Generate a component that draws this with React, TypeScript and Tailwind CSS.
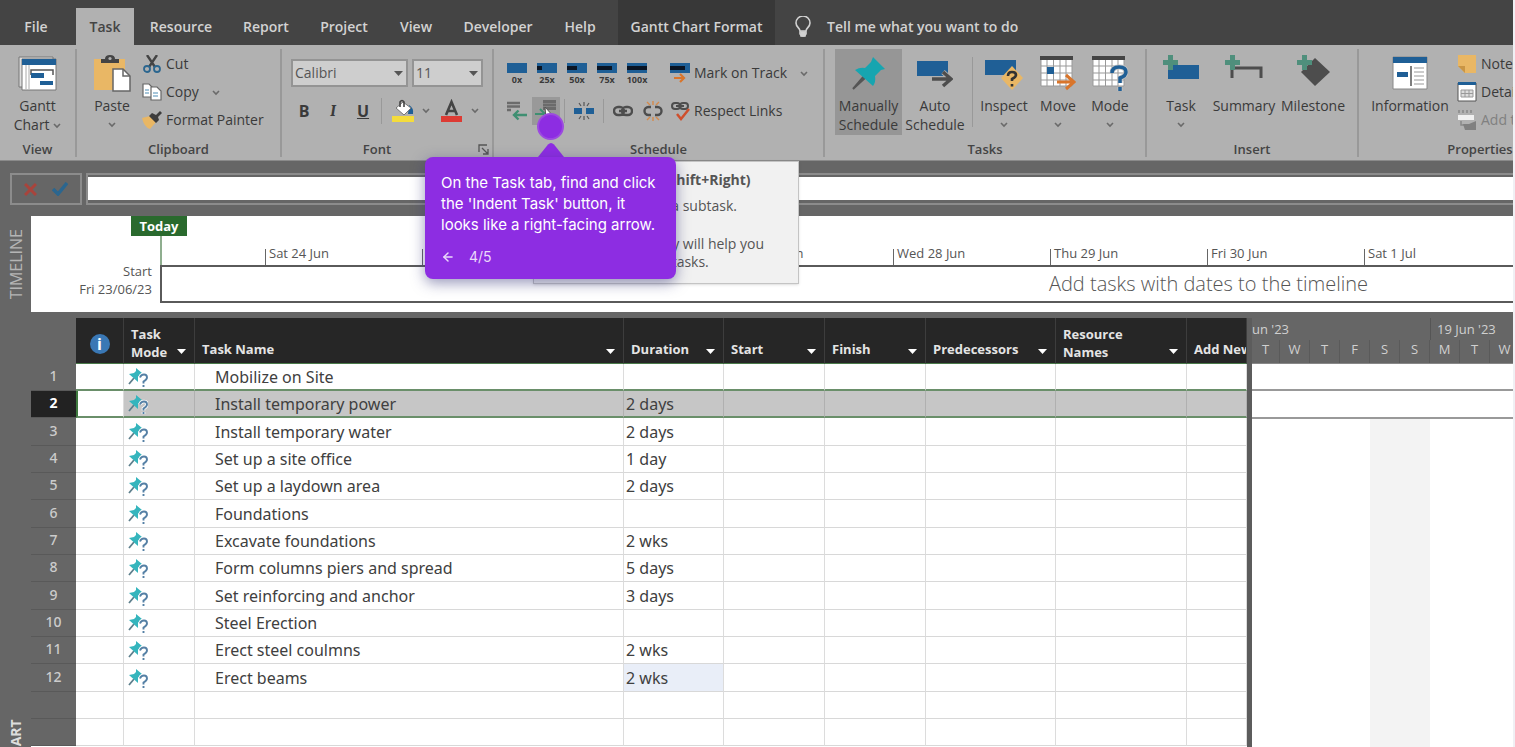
import type { ReactNode } from 'react'
import { ArrowLeft } from 'lucide-react'
import clsx from 'clsx'

const tabs = [
  { name: 'Resource', width: 'w-[94px]' },
  { name: 'Report', width: 'w-[76px]' },
  { name: 'Project', width: 'w-[80px]' },
  { name: 'View', width: 'w-[64px]' },
  { name: 'Developer', width: 'w-[100px]' },
  { name: 'Help', width: 'w-[64px]' },
]

const tasks = [
  { name: 'Mobilize on Site', duration: '' },
  { name: 'Install temporary power', duration: '2 days' },
  { name: 'Install temporary water', duration: '2 days' },
  { name: 'Set up a site office', duration: '1 day' },
  { name: 'Set up a laydown area', duration: '2 days' },
  { name: 'Foundations', duration: '' },
  { name: 'Excavate foundations', duration: '2 wks' },
  { name: 'Form columns piers and spread', duration: '5 days' },
  { name: 'Set reinforcing and anchor', duration: '3 days' },
  { name: 'Steel Erection', duration: '' },
  { name: 'Erect steel coulmns', duration: '2 wks' },
  { name: 'Erect beams', duration: '2 wks' },
  { name: '', duration: '' },
  { name: '', duration: '' },
]

const timelineDays = ['Sat 24 Jun', 'Sun 25 Jun', 'Mon 26 Jun', 'Tue 27 Jun', 'Wed 28 Jun', 'Thu 29 Jun', 'Fri 30 Jun', 'Sat 1 Jul']
const ganttDays = ['T', 'W', 'T', 'F', 'S', 'S', 'M', 'T', 'W']

const SELECTED = 1

export default function App() {
  return (
    <div className="relative h-screen overflow-hidden bg-[#f0f0f4] pr-[2px] font-['Open_Sans',sans-serif] text-sm text-[#3a3a3a]">
      <div className="flex h-full flex-col overflow-hidden bg-[#666]">
        <TabBar />
        <Ribbon />
        <EntryBar />
        <Timeline />
        <div className="mt-[6px] flex min-h-0 flex-1">
          <div className="flex w-[31px] shrink-0 justify-center overflow-hidden pt-[401px]">
            <span className="h-[100px] rotate-180 text-right leading-[18px] font-bold text-[#ddd] [writing-mode:vertical-rl]">
              GANTT CHART
            </span>
          </div>
          <TaskTable />
          <GanttPane />
        </div>
      </div>
      <IndentTooltip />
      <TourStep />
    </div>
  )
}

function TabBar() {
  return (
    <nav className="flex h-[45px] shrink-0 items-end overflow-hidden bg-[#444] font-semibold whitespace-nowrap text-[#d2d2d2]">
      <button className="h-[37px] w-[76px] shrink-0 pr-1">File</button>
      <button className="h-[37px] w-[58px] shrink-0 bg-[#b1b1b1] text-[#444]">Task</button>
      {tabs.map((tab) => (
        <button key={tab.name} className={clsx('h-[37px] shrink-0', tab.width)}>
          {tab.name}
        </button>
      ))}
      <button className="ml-[6px] h-[45px] w-[157px] shrink-0 bg-[#383838] pt-2">Gantt Chart Format</button>
      <button className="flex h-[37px] items-center gap-[16px] pl-[20px]">
        <svg width="16" height="22" viewBox="0 0 16 22" fill="none" stroke="#d2d2d2" strokeWidth="1.6">
          <path d="M5 15c0-3-4-4-4-8a7 7 0 0 1 14 0c0 4-4 5-4 8zM5 15v3l2 2h2l2-2v-3" />
          <path d="M6 16h4v4H6z" fill="#d2d2d2" />
        </svg>
        Tell me what you want to do
      </button>
    </nav>
  )
}

function Group({ label, className, children }: { label: string; className: string; children: ReactNode }) {
  return (
    <section className={clsx('relative flex shrink-0 flex-col border-r-2 border-[#999]', className)}>
      <div className="flex h-[93px]">{children}</div>
      <div className="text-center text-[13px] leading-[15px] font-semibold text-[#444]">{label}</div>
    </section>
  )
}

function BigButton({ icon, label, menu, className }: { icon: ReactNode; label: ReactNode; menu?: boolean; className: string }) {
  return (
    <button className={clsx('flex h-[86px] shrink-0 flex-col items-center leading-[19px] font-medium whitespace-nowrap', className)}>
      <span className="flex h-[47px] items-center justify-center">{icon}</span>
      <span>{label}</span>
      {menu && (
        <span className="flex h-[19px] items-center">
          <Chevron />
        </span>
      )}
    </button>
  )
}

function SmallButton({ icon, label, menu, muted }: { icon: ReactNode; label: string; menu?: boolean; muted?: boolean }) {
  return (
    <button className={clsx('flex h-[28px] items-center font-medium whitespace-nowrap', muted && 'text-[#808080]')}>
      <span className="mr-[4px] flex w-[20px] justify-center">{icon}</span>
      {label}
      {menu && <span className="ml-[13px]"><Chevron /></span>}
    </button>
  )
}

function Ribbon() {
  return (
    <div className="flex h-[116px] shrink-0 overflow-hidden border-b border-[#8a8a8a] bg-[#b1b1b1] pt-1 pb-[3px]">
      <Group label="View" className="w-[77px]">
        <BigButton className="w-full" icon={<GanttIcon />} label={<>Gantt<br />Chart <Chevron /></>} />
      </Group>

      <Group label="Clipboard" className="w-[205px]">
        <BigButton className="ml-[8px] w-[54px]" icon={<PasteIcon />} label="Paste" menu />
        <div className="ml-[3px] flex flex-col pt-px">
          <SmallButton icon={<CutIcon />} label="Cut" />
          <SmallButton icon={<CopyIcon />} label="Copy" menu />
          <SmallButton icon={<PainterIcon />} label="Format Painter" />
        </div>
      </Group>

      <Group label="Font" className="w-[212px] pr-[20px]">
        <div className="flex flex-col pt-[10px] pl-[9px]">
          <div className="flex gap-[4px]">
            <FontSelect label="Font" value="Calibri" className="w-[117px]" />
            <FontSelect label="Font size" value="11" className="w-[71px]" />
          </div>
          <div className="mt-[10px] flex h-[28px] items-center">
            <button className="w-[26px] text-base font-bold">B</button>
            <button className="w-[32px] font-serif text-base font-bold italic">I</button>
            <button className="w-[28px] text-base font-bold underline">U</button>
            <span className="mx-[4px] h-[26px] w-px bg-[#999]" />
            <button className="flex w-[55px] shrink-0 items-center gap-[8px] pl-[6px]" aria-label="Fill colour">
              <svg width="22" height="24" viewBox="0 0 22 24">
                <path d="M17 6q5 3 4 9h-5z" fill="#1f5f96" />
                <path d="m4 9 7-6 8 6-7 7z" fill="#fff" stroke="#777" />
                <path d="M8 8V3q2-3 4 0v5" fill="none" stroke="#444" strokeWidth="1.6" />
                <path d="M0 17h22v6H0z" fill="#f4dc3c" />
              </svg>
              <Chevron />
            </button>
            <button className="flex shrink-0 items-center gap-[9px]" aria-label="Font colour">
              <svg width="21" height="24" viewBox="0 0 21 24">
                <path d="m5 16 5.500-13L16 16M7.500 12h6" fill="none" stroke="#444" strokeWidth="2.600" />
                <path d="M0 17h21v6H0z" fill="#dd3b34" />
              </svg>
              <Chevron />
            </button>
          </div>
        </div>
        <svg className="absolute right-[3px] bottom-[2px]" width="11" height="11" viewBox="0 0 11 11" fill="none" stroke="#555" strokeWidth="1.3">
          <path d="M1 8V1h8M4 4l6 6M10 5v5H5" />
        </svg>
      </Group>

      <Group label="Schedule" className="w-[331px]">
        <div className="flex w-[174px] flex-col pt-[10px] pl-[8px]">
          <div className="flex h-[28px]">
            {[0, 25, 50, 75, 100].map((percent) => (
              <button key={percent} className="flex w-[30px] flex-col items-center pt-[4px]">
                <svg width="20" height="10" viewBox="0 0 20 10">
                  <path d="M0 0h20v10H0z" fill="#1f5f96" />
                  {percent > 0 && <path d={`M0 3h${percent / 5}v4H0z`} fill="#0a1524" />}
                </svg>
                <span className="text-[9px] leading-[13px] font-bold">{percent}x</span>
              </button>
            ))}
          </div>
          <div className="mt-[10px] flex h-[28px] items-center">
            <IconButton label="Outdent Task">
              <svg width="20" height="20" viewBox="0 0 20 20" fill="none">
                <path d="M0 2h13M0 5.500h13M0 9h4" stroke="#6b6b6b" strokeWidth="2.600" />
                <path d="M20 14H7m4.500-4.500L7 14l4.500 4.500" stroke="#3f8f72" strokeWidth="2.400" />
              </svg>
            </IconButton>
            <button aria-label="Indent Task" className="flex h-[28px] w-[28px] items-start justify-center bg-[#999] pt-[3px]">
              <svg width="22" height="20" viewBox="0 0 22 20" fill="none">
                <path d="M8 1.500h13M8 5h13M8 8.500h13" stroke="#6b6b6b" strokeWidth="2.800" />
                <path d="M0 14h9M5 9l5 5" stroke="#3f8f72" strokeWidth="2" />
                <path d="m10 7 1 12 3-3 5 1z" fill="#fff" stroke="#555" />
              </svg>
            </button>
            <span className="mx-[4px] h-[24px] w-px bg-[#999]" />
            <IconButton label="Split Task">
              <svg width="20" height="20" viewBox="0 0 20 20">
                <path d="M0 7h8v6H0zM12 7h8v6h-8z" fill="#1f5f96" />
                <path d="M10 1v4M5 2l2 3M15 2l-2 3M10 19v-4M5 18l2-3M15 18l-2-3" stroke="#555" strokeWidth="1.200" />
              </svg>
            </IconButton>
            <span className="mx-[4px] h-[24px] w-px bg-[#999]" />
            <IconButton label="Link Tasks">
              <ChainIcon />
            </IconButton>
            <IconButton label="Unlink Tasks">
              <svg width="20" height="20" viewBox="0 0 20 20" fill="none">
                <path d="M8 6H5.500a4 4 0 0 0 0 8H8M12 6h2.500a4 4 0 0 1 0 8H12" stroke="#4d4d4d" strokeWidth="2.400" />
                <path d="M10 0v4M4 1l3 3M16 1l-3 3M10 20v-4M4 19l3-3M16 19l-3-3" stroke="#d68a4a" strokeWidth="1.400" />
              </svg>
            </IconButton>
          </div>
        </div>
        <div className="flex flex-col gap-[10px] pt-[10px] pl-[2px]">
          <SmallButton
            label="Mark on Track"
            menu
            icon={
              <svg width="20" height="20" viewBox="0 0 20 20" fill="none">
                <path d="M0 0h20v10H0z" fill="#1f5f96" />
                <path d="M0 3h15v4H0z" fill="#0a1524" />
                <path d="M4 15h10M10 11l4 4-4 4" stroke="#d9752b" strokeWidth="2.200" />
              </svg>
            }
          />
          <SmallButton
            label="Respect Links"
            icon={
              <svg width="20" height="20" viewBox="0 0 20 20" fill="none">
                <path d="M5 2h2a3 3 0 0 1 0 6H5a3 3 0 0 1 0-6zM13 2h2a3 3 0 0 1 0 6h-2a3 3 0 0 1 0-6zM6 5h8" stroke="#4d4d4d" strokeWidth="2" />
                <path d="m7 13 4 5 8-10" stroke="#cf4f2c" strokeWidth="2.500" />
              </svg>
            }
          />
        </div>
      </Group>

      <Group label="Tasks" className="w-[322px]">
        <BigButton className="ml-[10px] w-[67px] bg-[#969696]" icon={<PinIcon />} label={<>Manually<br />Schedule</>} />
        <BigButton
          className="w-[66px]"
          label={<>Auto<br />Schedule</>}
          icon={
            <svg width="36" height="32" viewBox="0 0 36 32" fill="none">
              <path d="M0 4h31v15H0z" fill="#1f5f96" />
              <path d="M15 22h18M26 15l8 7-8 7" stroke="#b1b1b1" strokeWidth="5" />
              <path d="M15 22h18M26 15l8 7-8 7" stroke="#4d4d4d" strokeWidth="3.500" />
            </svg>
          }
        />
        <span className="mx-[4px] mt-[8px] h-[70px] w-px bg-[#999]" />
        <BigButton
          className="w-[54px]"
          label="Inspect"
          menu
          icon={
            <svg width="38" height="34" viewBox="0 0 38 34" fill="none">
              <path d="M0 4h31v15H0z" fill="#1f5f96" />
              <path d="m27 10 11 12-11 12-11-12z" fill="#e9b765" />
              <path d="M23 20q0-4 4-4t4 3q0 2-4 4v2M27 28v2.500" stroke="#333" strokeWidth="2.600" />
            </svg>
          }
        />
        <BigButton
          className="w-[54px]"
          label="Move"
          menu
          icon={
            <svg width="36" height="36" viewBox="0 0 36 36" fill="none">
              <CalendarGrid />
              <path d="M7 12h7v7H7z" fill="#1f5f96" />
              <path d="M17 27h16M26 20l8 7-8 7" stroke="#d9752b" strokeWidth="3" />
            </svg>
          }
        />
        <BigButton
          className="w-[50px]"
          label="Mode"
          menu
          icon={
            <svg width="36" height="36" viewBox="0 0 36 36" fill="none">
              <CalendarGrid />
              <path d="M20 18q0-6 7-6t7 5q0 4-6 6v5M28 32v4" stroke="#c4c4c4" strokeWidth="5" />
              <path d="M20 18q0-6 7-6t7 5q0 4-6 6v5M28 32v4" stroke="#1f5f96" strokeWidth="3.500" />
            </svg>
          }
        />
      </Group>

      <Group label="Insert" className="w-[212px]">
        <BigButton
          className="ml-[3px] w-[62px]"
          label="Task"
          menu
          icon={
            <svg width="36" height="36" viewBox="0 0 36 36">
              <path d="M5 10h31v14H5z" fill="#1f5f96" />
              <PlusMark />
            </svg>
          }
        />
        <BigButton
          className="w-[64px]"
          label="Summary"
          icon={
            <svg width="38" height="36" viewBox="0 0 38 36">
              <path d="M7 23V13h29v10" fill="none" stroke="#4d4d4d" strokeWidth="3" />
              <PlusMark />
            </svg>
          }
        />
        <BigButton
          className="ml-[2px] w-[70px]"
          label="Milestone"
          icon={
            <svg width="33" height="36" viewBox="0 0 33 36">
              <path d="M18 3l15 14-15 14L4 17z" fill="#4d4d4d" />
              <PlusMark />
            </svg>
          }
        />
      </Group>

      <Group label="Properties" className="w-[244px]">
        <BigButton
          className="ml-[6px] w-[90px]"
          label="Information"
          icon={
            <svg width="36" height="34" viewBox="0 0 36 34">
              <path d="M1 1h34v32H1z" fill="#fff" stroke="#888" />
              <path d="M1 1h34v6H1z" fill="#1f5f96" />
              <path d="M5 16h11v5H5z" fill="#1f5f96" />
              <path d="M19 10v20" stroke="#555" strokeWidth="1.500" />
              <path d="M22 12h10M22 16h10M22 20h10M22 24h10M22 28h10" stroke="#999" />
            </svg>
          }
        />
        <div className="ml-[2px] flex flex-col pt-px">
          <SmallButton
            label="Notes"
            icon={
              <svg width="18" height="18" viewBox="0 0 18 18">
                <path d="M0 0h18v18H7l-7-7z" fill="#e9b765" />
                <path d="M0 11h7v7z" fill="#c99545" />
              </svg>
            }
          />
          <SmallButton
            label="Details"
            icon={
              <svg width="20" height="20" viewBox="0 0 20 20">
                <path d="M1 1h18v18H1z" fill="#fff" stroke="#555" />
                <path d="M1 0h18v3H1z" fill="#1f5f96" />
                <path d="M4 8h12v7H4zM4 11.500h12M8 8v7M12 8v7" fill="#ddd" stroke="#999" />
              </svg>
            }
          />
          <SmallButton
            label="Add to Timeline"
            muted
            icon={
              <svg width="20" height="20" viewBox="0 0 20 20">
                <path d="M1 5h16v5H1z" fill="#f0f0f0" />
                <path d="M2 0v3M6 0v3M10 0v3M14 0v3M4 11v4h4" fill="none" stroke="#888" strokeWidth="1.500" />
                <path d="M6 14h6l7-3v9H8z" fill="#808080" />
              </svg>
            }
          />
        </div>
      </Group>
    </div>
  )
}

function FontSelect({ label, value, className }: { label: string; value: string; className: string }) {
  return (
    <div className={clsx('relative', className)}>
      <select
        aria-label={label}
        defaultValue={value}
        className="h-[28px] w-full appearance-none border-2 border-[#949494] bg-[#cecece] pl-[2px] text-sm text-[#555]"
      >
        <option>{value}</option>
      </select>
      <Caret className="pointer-events-none absolute top-[12px] right-[5px] fill-[#555]" />
    </div>
  )
}

function IconButton({ label, children }: { label: string; children: ReactNode }) {
  return (
    <button aria-label={label} className="flex h-[28px] w-[30px] shrink-0 items-center justify-center">
      {children}
    </button>
  )
}

function EntryBar() {
  return (
    <div className="flex shrink-0 gap-[4px] pt-[12px] pb-[11px] pl-[10px]">
      <div className="flex h-[32px] w-[72px] items-center justify-around border-2 border-[#8c8c8c] px-[4px]">
        <button aria-label="Cancel">
          <svg width="13" height="13" viewBox="0 0 13 13" stroke="#a8443c" strokeWidth="3">
            <path d="m1 1 11 11M12 1 1 12" />
          </svg>
        </button>
        <button aria-label="Enter">
          <svg width="16" height="14" viewBox="0 0 16 14" fill="none" stroke="#2b668f" strokeWidth="3.500">
            <path d="m1 7 5 5 9-11" />
          </svg>
        </button>
      </div>
      <div className="h-[32px] flex-1 border-y-2 border-l-2 border-[#8c8c8c] pt-[2px]">
        <input aria-label="Entry" className="block h-[23px] w-full bg-white px-2 outline-none" />
      </div>
    </div>
  )
}

function Timeline() {
  return (
    <div className="flex h-[96px] shrink-0">
      <div className="flex w-[31px] shrink-0 items-center justify-center">
        <span className="rotate-180 text-base leading-[18px] text-[#b5b5b5] [writing-mode:vertical-rl]">TIMELINE</span>
      </div>
      <div className="flex min-w-0 flex-1 bg-white text-[13px] text-[#555]">
        <div className="w-[129px] shrink-0 pt-[46px] pr-[8px] text-right leading-[18px]">
          <div>Start</div>
          <div>Fri 23/06/23</div>
        </div>
        <div className="min-w-0 flex-1">
          <div className="relative flex h-[49px] items-end overflow-x-clip overflow-y-visible border-l-2 border-[#8fae8f] pl-[103px]">
            {timelineDays.map((day) => (
              <div key={day} className="h-[16px] w-[157px] shrink-0 border-l border-[#666] pl-[3px]">
                <span className="relative -top-[6px] block leading-[20px]">{day}</span>
              </div>
            ))}
          </div>
          <div className="flex h-[38px] items-center border-2 border-r-0 border-[#5a5a5a]">
            <span className="mx-auto pl-[742px] text-[20px] font-light whitespace-nowrap text-[#555]">
              Add tasks with dates to the timeline
            </span>
          </div>
        </div>
      </div>
      <span className="absolute left-[131px] h-[20px] w-[56px] bg-[#2a6a2e] text-center text-[13px] leading-[20px] font-bold text-white">
        Today
      </span>
    </div>
  )
}

function HeadCell({ children, className, twoLines, noCaret }: { children: ReactNode; className: string; twoLines?: boolean; noCaret?: boolean }) {
  return (
    <th className={clsx('overflow-hidden border-r border-b border-r-[#3d3d3d] border-b-[#4a7a4a] bg-[#262626] p-0 align-bottom', className)}>
      <div className="flex items-end justify-between pr-[8px] pl-[7px]">
        <span className={clsx('text-left leading-[18px] font-bold', twoLines ? 'pb-[2px]' : 'pb-[5px] whitespace-nowrap')}>
          {children}
        </span>
        {!noCaret && <Caret className="mb-[9px] shrink-0 fill-white" />}
      </div>
    </th>
  )
}

function TaskTable() {
  return (
    <div className="w-[1221px] shrink-0 border-r-[5px] border-[#5c5c5c] bg-white">
      <table className="w-[1216px] table-fixed border-separate border-spacing-0">
        <thead>
          <tr className="h-[46px] text-[13px] text-[#e4e4e4]">
            <th className="w-[45px] bg-[#666]" aria-label="Row" />
            <th className="w-[48px] border-r border-b border-r-[#3d3d3d] border-b-[#4a7a4a] bg-[#262626] p-0">
              <span className="mx-auto mt-[6px] flex h-[20px] w-[20px] items-center justify-center rounded-full bg-[#3a78b5] text-base leading-none font-bold text-white">
                i
              </span>
            </th>
            <HeadCell className="w-[71px]" twoLines>Task<br />Mode</HeadCell>
            <HeadCell className="w-[429px]">Task Name</HeadCell>
            <HeadCell className="w-[100px]">Duration</HeadCell>
            <HeadCell className="w-[101px]">Start</HeadCell>
            <HeadCell className="w-[101px]">Finish</HeadCell>
            <HeadCell className="w-[130px]">Predecessors</HeadCell>
            <HeadCell className="w-[131px]" twoLines>Resource<br />Names</HeadCell>
            <HeadCell className="w-[60px]" noCaret>Add New</HeadCell>
          </tr>
        </thead>
        <tbody className="font-['Noto_Sans',sans-serif] text-base leading-[20px] text-[#404040]">
          {tasks.map((task, i) => {
            const selected = i === SELECTED
            const line = selected || i === SELECTED - 1 ? 'border-b-2 border-b-[#6a8f6a]' : 'border-b border-b-[#d8d8d8]'
            const cell = clsx('border-r p-0', line, selected ? 'border-r-[#b0b0b0] bg-[#c6c6c6]' : 'border-r-[#dcdcdc]')
            return (
              <tr key={i} className={i % 3 === 2 ? 'h-[28px]' : 'h-[27px]'}>
                <th
                  scope="row"
                  className={clsx(
                    'border-b border-b-[#595959] p-0 pb-[2px] text-sm',
                    selected ? 'bg-[#222] font-bold text-white' : 'bg-[#666] font-medium text-[#ccc]',
                  )}
                >
                  {i < 12 && i + 1}
                </th>
                <td className={clsx('border-r border-r-[#dcdcdc] p-0', line, selected && 'border-l-2 border-l-[#3f7a3f]')} />
                <td className={clsx(cell, 'pl-[4px]')}>{task.name && <ModeIcon />}</td>
                <td className={clsx(cell, 'pl-[20px]')}>{task.name}</td>
                <td className={clsx(cell, 'pl-[2px]', i === 11 && 'bg-[#e9eef8]')}>{task.duration}</td>
                <td className={cell} />
                <td className={cell} />
                <td className={cell} />
                <td className={cell} />
                <td className={cell} />
              </tr>
            )
          })}
        </tbody>
      </table>
    </div>
  )
}

function GanttPane() {
  return (
    <div className="flex min-w-0 flex-1 flex-col bg-white">
      <div className="h-[46px] shrink-0 overflow-hidden border-b border-[#888] bg-[#666] text-[13px] font-medium text-[#d0d0d0]">
        <div className="flex h-[22px] leading-[22px] whitespace-nowrap">
          <span className="w-[178px] shrink-0">un '23</span>
          <span className="border-l border-[#555] pl-[6px]">19 Jun '23</span>
        </div>
        <div className="flex h-[23px] leading-[18px]">
          {ganttDays.map((day, i) => (
            <span key={i} className="w-[30px] shrink-0 border-r border-[#5a5a5a] text-center first:w-[28px]">
              {day}
            </span>
          ))}
        </div>
      </div>
      <div className="flex flex-1 flex-col">
        <div className="h-[27px] border-b-2 border-[#999]" />
        <div className="h-[28px] border-b-2 border-[#999]" />
        <div className="flex flex-1 pl-[118px]">
          <div className="w-[60px] bg-[#f3f3f3]" />
        </div>
      </div>
    </div>
  )
}

function IndentTooltip() {
  return (
    <div className="absolute top-[161px] left-[533px] w-[266px] border border-[#c4c4c4] bg-[#f1f1f1] pt-[9px] pb-[12px] pl-[16px] leading-[18px] font-medium whitespace-nowrap text-[#555] shadow">
      <p className="font-bold">Indent Task (Alt+Shift+Right)</p>
      <p className="mt-[8px]">Turn this task into a subtask.</p>
      <p className="mt-[20px]">Using this hierarchy will help you</p>
      <p>and organize your tasks.</p>
    </div>
  )
}

function TourStep() {
  return (
    <div className="absolute top-[113px] left-[425px] flex w-[251px] flex-col items-center">
      <span className="h-[27px] w-[27px] rounded-full border-2 border-[#9c4ae0] bg-[#8d2de2]" />
      <svg className="mt-[3px]" width="26" height="14" viewBox="0 0 26 14">
        <path d="M0 14 10 1.500q3-3 6 0L26 14z" fill="#8d2de2" />
      </svg>
      <div className="w-full rounded-lg bg-[#8d2de2] px-4 pt-[15px] pb-[12px] font-['Inter',sans-serif] text-[15px] leading-[21px] whitespace-nowrap text-white shadow-[0_4px_14px_rgba(50,50,120,0.5)]">
        <p>
          On the Task tab, find and click
          <br />
          the 'Indent Task' button, it
          <br />
          looks like a right-facing arrow.
        </p>
        <div className="mt-[11px] flex items-center gap-[14px] text-sm leading-[21px] text-[#ead9fa]">
          <button aria-label="Previous step">
            <ArrowLeft size={14} strokeWidth={2.5} />
          </button>
          <span>4/5</span>
        </div>
      </div>
    </div>
  )
}

/* icons */

function Chevron() {
  return (
    <svg className="inline-block" width="8" height="6" viewBox="0 0 8 6" fill="none" stroke="#6a6a6a" strokeWidth="1.600">
      <path d="m1 1 3 3 3-3" />
    </svg>
  )
}

function Caret({ className }: { className: string }) {
  return (
    <svg className={className} width="9" height="5" viewBox="0 0 9 5">
      <path d="M0 0h9L4.500 5z" />
    </svg>
  )
}

function PlusMark() {
  return <path d="M5 0h5v5h5v5h-5v5H5v-5H0V5h5z" fill="#4f8f7c" />
}

function CalendarGrid() {
  return (
    <>
      <path d="M1 2h31v29H1z" fill="#fff" />
      <path d="M0 1h33v4H0z" fill="#444" />
      <path d="M1 5v26h31V5M7 5v26M13.500 5v26M20 5v26M26 5v26M1 11h31M1 18h31M1 25h31" stroke="#999" fill="none" />
    </>
  )
}

function ChainIcon() {
  return (
    <svg width="20" height="12" viewBox="0 0 20 12" fill="none" stroke="#4d4d4d" strokeWidth="2.400">
      <path d="M5 2h2a4 4 0 0 1 0 8H5a4 4 0 0 1 0-8zM13 2h2a4 4 0 0 1 0 8h-2a4 4 0 0 1 0-8zM6 6h8" />
    </svg>
  )
}

function GanttIcon() {
  return (
    <svg width="40" height="36" viewBox="0 0 40 36">
      <path d="M1 2h34v30H1z" fill="#ddd" stroke="#777" />
      <path d="M4 4h34v31H4z" fill="#fff" stroke="#777" />
      <path d="M4 4h34v6H4z" fill="#1f5f96" />
      <path d="M8 10v24M11 10v24" stroke="#aaa" />
      <path d="M13 20v-5h22v5" fill="none" stroke="#555" strokeWidth="1.500" />
      <path d="M13 18h13v5H13zM22 26h13v4H22z" fill="#1f5f96" />
    </svg>
  )
}

function PasteIcon() {
  return (
    <svg width="38" height="38" viewBox="0 0 38 38">
      <path d="M1 5h31v31H1z" fill="#e9b765" />
      <path d="M8 9V5h4q0-4 5-4t5 4h4v4z" fill="#444" />
      <circle cx="17" cy="4.500" r="1.600" fill="#b1b1b1" />
      <path d="M20 15h10l7 7v15H20z" fill="#fff" stroke="#666" strokeWidth="1.500" />
      <path d="M30 15v7h7" fill="none" stroke="#666" strokeWidth="1.500" />
    </svg>
  )
}

function CutIcon() {
  return (
    <svg width="18" height="18" viewBox="0 0 18 18" fill="none">
      <path d="m4 0 8 12M14 0 6 12" stroke="#444" strokeWidth="2.400" />
      <circle cx="4" cy="14" r="3" stroke="#2b668f" strokeWidth="1.800" />
      <circle cx="14" cy="14" r="3" stroke="#2b668f" strokeWidth="1.800" />
    </svg>
  )
}

function CopyIcon() {
  return (
    <svg width="20" height="18" viewBox="0 0 20 18" fill="#fff" stroke="#666" strokeWidth="1.200">
      <path d="M1 1h6l4 4v9H1z" />
      <path d="M9 4h6l4 4v9H9z" />
      <path d="M3 7h4M3 10h4M11 10h5M11 13h5" stroke="#4f8db5" />
    </svg>
  )
}

function PainterIcon() {
  return (
    <svg width="20" height="18" viewBox="0 0 20 18">
      <path d="M0 7 8 5l6 6-6 7q-6-2-8-11z" fill="#e9b765" />
      <path d="m7 5 3-3 4 2 4-4 2 2-4 4 1 3-3 3z" fill="#3d3d3d" />
    </svg>
  )
}

function PinIcon() {
  return (
    <svg width="34" height="34" viewBox="0 0 34 34">
      <path d="M13 19 1 33l13-12z" stroke="#555" strokeWidth="2" />
      <path d="m21 1 12 12-4 1-6 6q1 6-2 10L3 14q5-3 10-2l6-6z" fill="#17a5b0" />
    </svg>
  )
}

function ModeIcon() {
  return (
    <svg width="20" height="20" viewBox="0 0 20 20" fill="none">
      <path d="M6 11 1 17" stroke="#5d7f8c" strokeWidth="1.800" />
      <path d="m8 1 6 5-2 1-2 3v5L1 7l5-1 2-2z" fill="#35b5bd" />
      <path d="M12 10.500q1-3 4-3t3 3q0 2-3.500 4v2M15.500 18v2" stroke="#fff" strokeWidth="3.600" />
      <path d="M12 10.500q1-3 4-3t3 3q0 2-3.500 4v2M15.500 18v2" stroke="#5580a5" strokeWidth="1.900" />
    </svg>
  )
}
